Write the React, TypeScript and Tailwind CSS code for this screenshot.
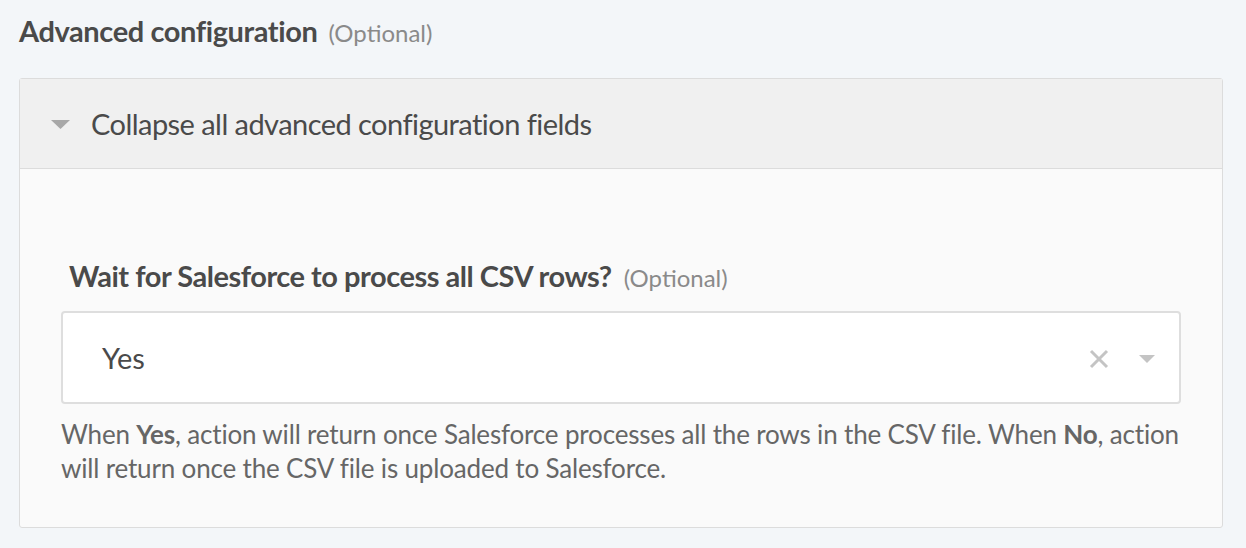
import React from "react";

export default function App() {
  return (
    <div className="w-[1246px] h-[548px] bg-[#f3f6f9] overflow-hidden" style={{ fontFamily: "Lato, 'Noto Sans', sans-serif" }}>
      <div className="pl-[19px] pr-[23px] pt-[13px]">
        <div className="flex items-baseline h-[36px] leading-[36px]">
          <span className="text-[29px] font-bold text-[#4a4a4a] tracking-[-0.4px]">Advanced configuration</span>
          <span className="ml-[11px] text-[24px] text-[#8a8a8a]">(Optional)</span>
        </div>
        <div className="mt-[29px] border border-[#dcdcdc] rounded-[3px] bg-[#fafafa] h-[450px]">
          <div className="h-[90px] bg-[#f0f0f0] border-b border-[#dcdcdc] flex items-center pl-[31px]">
            <svg width="19" height="10" viewBox="0 0 19 10" className="mr-[21px] mt-[2px]">
              <polygon points="0,0 19,0 9.5,9" fill="#a8a8a8" />
            </svg>
            <span className="text-[29px] text-[#4a4a4a] tracking-[-0.55px]">Collapse all advanced configuration fields</span>
          </div>
          <div className="px-[41px] pt-[89px]">
            <div className="flex items-baseline pl-[8px] h-[36px] leading-[36px]">
              <span className="text-[29px] font-bold text-[#4a4a4a] tracking-[-0.48px]">Wait for Salesforce to process all CSV rows?</span>
              <span className="ml-[12px] text-[24px] text-[#8a8a8a]">(Optional)</span>
            </div>
            <div className="mt-[17px] h-[93px] bg-white border-2 border-[#dedede] rounded-[4px] flex items-center pl-[39px] pr-[24px]">
              <span className="text-[29px] text-[#4a4a4a] flex-1">Yes</span>
              <svg width="20" height="20" viewBox="0 0 20 20" className="mr-[30px] mt-[2px]">
                <path d="M2 2 L18 18 M18 2 L2 18" stroke="#c4c4c4" strokeWidth="3" />
              </svg>
              <svg width="16" height="8" viewBox="0 0 16 8" className="mt-[2px]">
                <polygon points="0,0 16,0 8,8" fill="#c4c4c4" />
              </svg>
            </div>
            <p className="mt-[13px] text-[26px] leading-[34px] tracking-[-0.17px] text-[#666666]">
              When <b className="font-bold">Yes</b>, action will return once Salesforce processes all the rows in the CSV file. When <b className="font-bold">No</b>, action will return once the CSV file is uploaded to Salesforce.
            </p>
          </div>
        </div>
      </div>
    </div>
  );
}
